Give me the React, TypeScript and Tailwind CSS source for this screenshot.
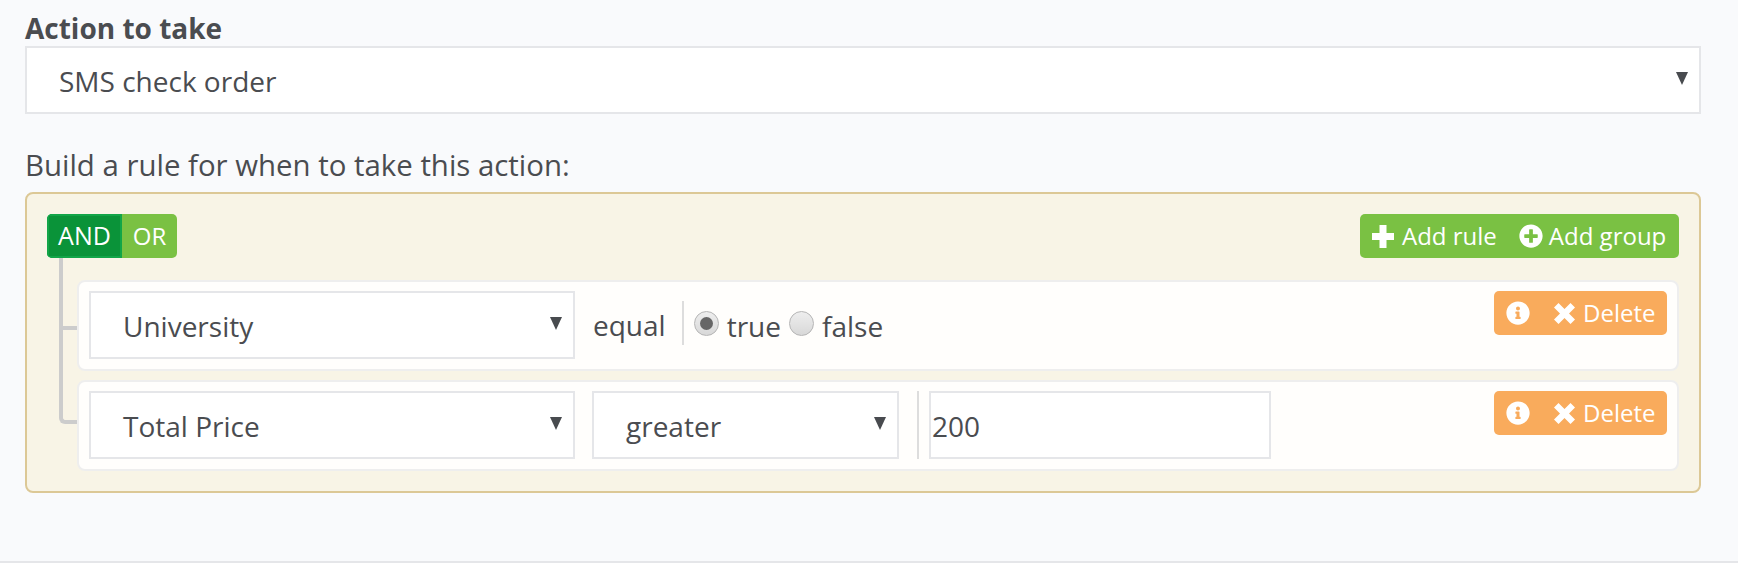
import { FaInfoCircle, FaPlusCircle } from "react-icons/fa";

function Caret() {
  return (
    <svg width="12" height="13" viewBox="0 0 12 13" className="shrink-0">
      <path d="M0 0H12L6 13Z" fill="#484b4f" />
    </svg>
  );
}

function PlusIcon() {
  return (
    <svg width="22" height="23" viewBox="0 0 22 23">
      <path d="M7.5 0H14.5V8H22V15H14.5V23H7.5V15H0V8H7.5Z" fill="currentColor" />
    </svg>
  );
}

function CrossIcon() {
  return (
    <svg width="21" height="21" viewBox="0 0 21 21">
      <path d="M4.5 0L10.5 6L16.5 0L21 4.5L15 10.5L21 16.5L16.5 21L10.5 15L4.5 21L0 16.5L6 10.5L0 4.5Z" fill="currentColor" />
    </svg>
  );
}

function SelectBox({ value, className }: { value: string; className: string }) {
  return (
    <div className={`flex h-[68px] shrink-0 items-center justify-between border-2 border-[#e5e6e9] bg-white pr-[11px] text-[28px] ${className}`}>
      <span className="pt-[2px]">{value}</span>
      <span className="-mt-[3px]">
        <Caret />
      </span>
    </div>
  );
}

function Radio({ checked }: { checked?: boolean }) {
  return (
    <span className="flex size-[25px] shrink-0 items-center justify-center rounded-full border border-[#b5b5b5] bg-gradient-to-b from-[#eeeeee] to-[#d8d8d8]">
      {checked && <span className="size-[13px] rounded-full bg-[#666666]" />}
    </span>
  );
}

function RuleActions() {
  return (
    <div className="ml-auto flex h-[44px] w-[173px] shrink-0 items-center rounded-[5px] bg-[#f9ab5c] pl-[12px] text-white">
      <FaInfoCircle className="size-[24px]" />
      <span className="ml-[24px]">
        <CrossIcon />
      </span>
      <span className="ml-[8px]">Delete</span>
    </div>
  );
}

export default function App() {
  return (
    <div className="h-[567px] bg-white font-['Open_Sans',sans-serif] text-[24px] text-[#4a4c50]">
      <div className="h-[563px] border-b-2 border-[#e5e6e9] bg-[#f9fafc] pl-[25px] pr-[37px] pt-[10px]">
        <div className="h-[36px] text-[28px] font-bold leading-[36px]">Action to take</div>
        <SelectBox value="SMS check order" className="w-full pl-[32px]" />

        <div className="mt-[32px] h-[38px] text-[29.4px] leading-[38px]">Build a rule for when to take this action:</div>

        <div className="mt-[8px] h-[301px] rounded-[8px] border-2 border-[#dcc896] bg-[#f8f4e6] pl-[20px] pr-[20px] pt-[20px]">
          <div className="flex items-start justify-between">
            <div className="flex h-[44px] overflow-hidden rounded-[5px] text-white">
              <span className="flex w-[75px] items-center justify-center border-2 border-[#12a548] bg-[#0a9339] text-[25px]">AND</span>
              <span className="flex w-[55px] items-center justify-center bg-[#7ac143]">OR</span>
            </div>
            <div className="flex h-[44px] w-[319px] items-center rounded-[5px] bg-[#7ac143] pl-[12px] text-white">
              <PlusIcon />
              <span className="ml-[8px]">Add rule</span>
              <FaPlusCircle className="ml-[22px] size-[24px]" />
              <span className="ml-[6px]">Add group</span>
            </div>
          </div>

          <div className="relative mt-[22px] flex flex-col gap-[9px] pl-[30px]">
            {/* tree lines from the AND/OR switch down to the rules */}
            <span className="absolute left-[12px] top-[-22px] h-[166px] w-[18px] rounded-bl-[6px] border-b-4 border-l-4 border-[#cccccc]" />
            <span className="absolute left-[12px] top-[46px] h-[4px] w-[18px] bg-[#cccccc]" />

            <div className="flex h-[91px] items-start rounded-[8px] border-2 border-[#eeeeee] bg-[#fffefc] pl-[10px] pr-[10px] pt-[9px]">
              <SelectBox value="University" className="w-[486px] pl-[32px]" />
              <div className="ml-[18px] flex h-[68px] items-center text-[28px]">
                <span>equal</span>
                <span className="-mt-[4px] ml-[16px] h-[44px] w-[2px] bg-[#dddddd]" />
                <span className="-mt-[4px] ml-[10px]">
                  <Radio checked />
                </span>
                <span className="ml-[8px] pt-[2px]">true</span>
                <span className="-mt-[4px] ml-[8px]">
                  <Radio />
                </span>
                <span className="ml-[8px] pt-[2px]">false</span>
              </div>
              <RuleActions />
            </div>

            <div className="flex h-[91px] items-start rounded-[8px] border-2 border-[#eeeeee] bg-[#fffefc] pl-[10px] pr-[10px] pt-[9px]">
              <SelectBox value="Total Price" className="w-[486px] pl-[32px]" />
              <SelectBox value="greater" className="ml-[17px] w-[307px] pl-[32px]" />
              <span className="ml-[18px] h-[68px] w-[2px] bg-[#dddddd]" />
              <div className="ml-[10px] flex h-[68px] w-[342px] items-center border-2 border-[#e5e6e9] bg-white pl-[1px] text-[28px]">
                <span className="pt-[2px]">200</span>
              </div>
              <RuleActions />
            </div>
          </div>
        </div>
      </div>
    </div>
  );
}
